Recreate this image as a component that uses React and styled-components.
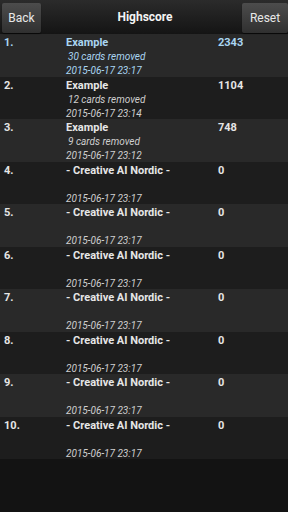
import styled, { createGlobalStyle } from "styled-components";

const GlobalStyle = createGlobalStyle`
  html, body {
    margin: 0;
    padding: 0;
    background: #131313;
  }
  body {
    font-family: Roboto, "Liberation Sans", sans-serif;
  }
`;

const Screen = styled.div`
  width: 288px;
  height: 512px;
  background: #131313;
  overflow: hidden;
`;

const Header = styled.div`
  height: 34px;
  display: flex;
  align-items: center;
  justify-content: space-between;
  padding: 0 0 0 2px;
  box-sizing: border-box;
  background: linear-gradient(#2b2b2b, #141414);
`;

const Button = styled.div`
  height: 30px;
  width: ${(p) => p.$w}px;
  margin-top: 1px;
  display: flex;
  align-items: center;
  justify-content: center;
  color: #e8e8e8;
  font-size: 12px;
  background: linear-gradient(#4c4c4c, #303030);
  border-radius: 2px;
  box-shadow: 0 1px 1px rgba(0, 0, 0, 0.6);
`;

const Title = styled.div`
  color: #f4f4f4;
  font-weight: bold;
  font-size: 12px;
  margin-left: 7px;
`;

const Row = styled.div`
  height: 42.5px;
  display: grid;
  grid-template-columns: 62px 152px 1fr;
  padding-left: 4px;
  background: ${(p) => (p.$odd ? "#292929" : "#1d1d1d")};
  color: ${(p) => (p.$top ? "#a9d6f2" : "#e6e6e6")};
`;

const Rank = styled.div`
  font-weight: bold;
  font-size: 11px;
  line-height: 14px;
  padding-top: 2px;
`;

const Info = styled.div`
  display: flex;
  flex-direction: column;
  padding-top: 2px;
`;

const Name = styled.div`
  font-weight: bold;
  font-size: 11px;
  line-height: 14px;
`;

const Sub = styled.div`
  font-style: italic;
  font-size: 10px;
  line-height: 14px;
  height: 14px;
  padding-left: ${(p) => (p.$indent ? 2 : 0)}px;
  color: ${(p) => (p.$top ? "#a9d6f2" : "#cfcfcf")};
`;

const Score = styled.div`
  font-weight: bold;
  font-size: 11px;
  line-height: 14px;
  padding-top: 2px;
`;

const rows = [
  { name: "Example", removed: "30 cards removed", date: "2015-06-17 23:17", score: 2343 },
  { name: "Example", removed: "12 cards removed", date: "2015-06-17 23:14", score: 1104 },
  { name: "Example", removed: "9 cards removed", date: "2015-06-17 23:12", score: 748 },
  ...Array.from({ length: 7 }, () => ({
    name: "- Creative AI Nordic -",
    removed: "",
    date: "2015-06-17 23:17",
    score: 0,
  })),
];

export default function App() {
  return (
    <Screen>
      <GlobalStyle />
      <Header>
        <Button $w={39}>Back</Button>
        <Title>Highscore</Title>
        <Button $w={46}>Reset</Button>
      </Header>
      {rows.map((r, i) => (
        <Row key={i} $odd={i % 2 === 0} $top={i === 0}>
          <Rank>{i + 1}.</Rank>
          <Info>
            <Name>{r.name}</Name>
            <Sub $indent $top={i === 0}>{r.removed}</Sub>
            <Sub $top={i === 0}>{r.date}</Sub>
          </Info>
          <Score>{r.score}</Score>
        </Row>
      ))}
    </Screen>
  );
}
